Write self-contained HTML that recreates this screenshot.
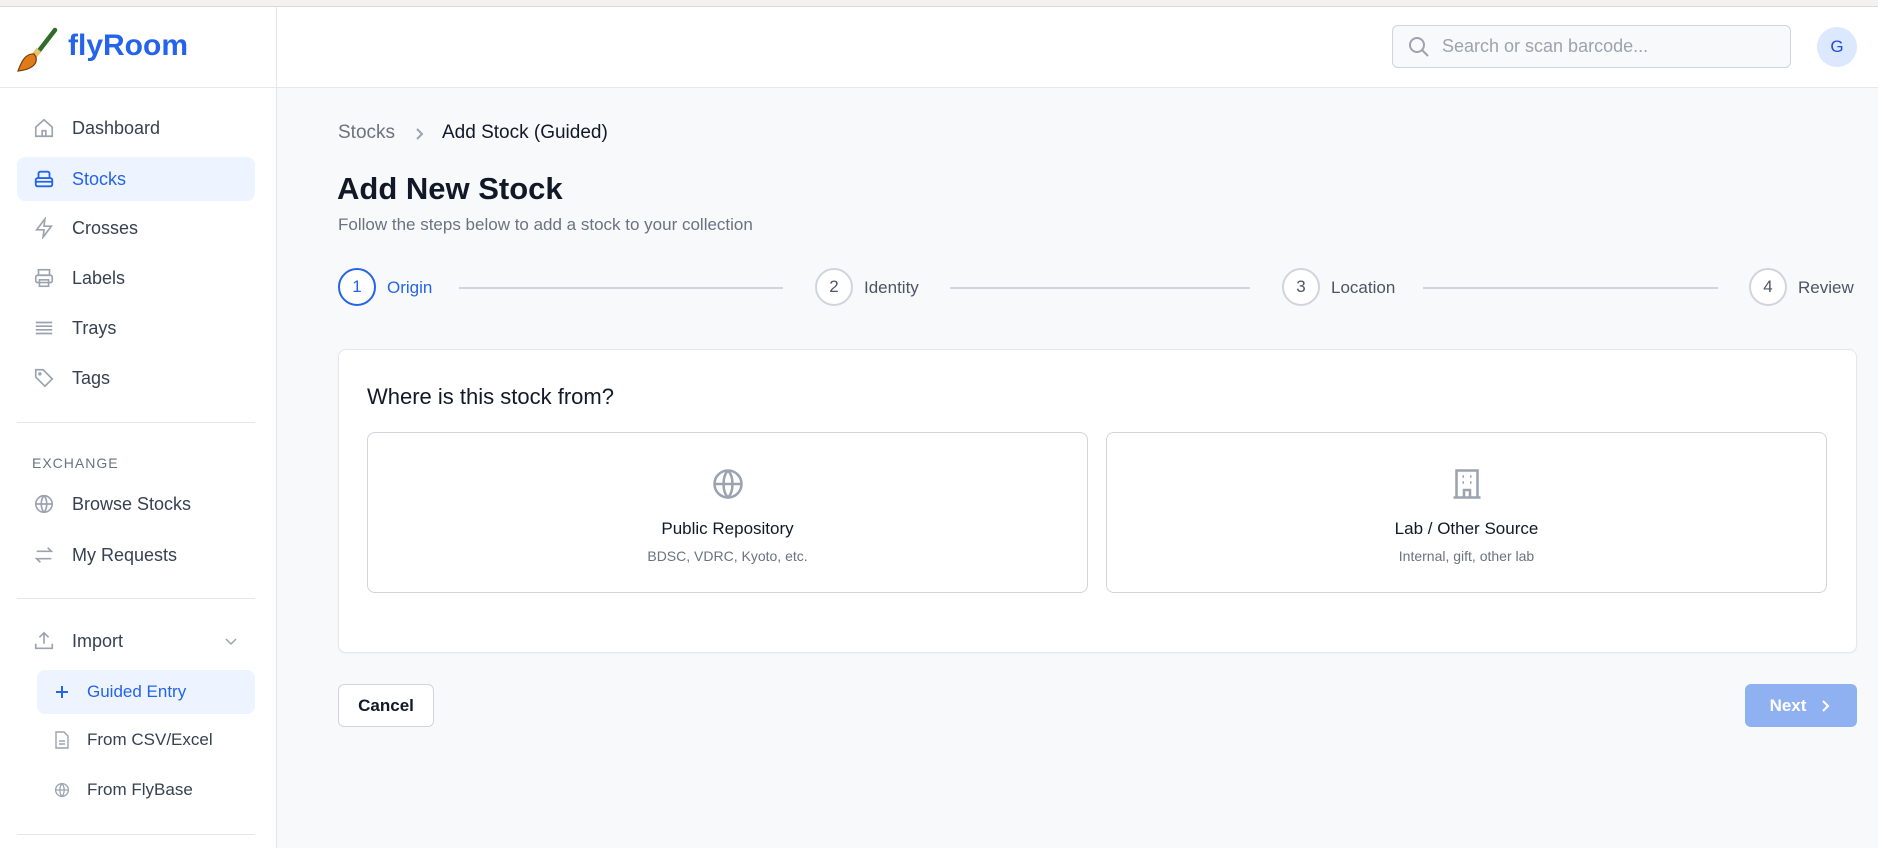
<!DOCTYPE html>
<html><head><meta charset="utf-8"><style>
*{box-sizing:border-box;margin:0;padding:0}
body{width:1878px;height:848px;overflow:hidden;background:#f8f9fb;font-family:"Liberation Sans",sans-serif;color:#1f2937;position:relative}
.a{position:absolute}
.topstrip{left:0;top:0;width:1878px;height:7px;background:#f3f2f1;border-bottom:1px solid #dcdad8}
.side{left:0;top:7px;width:277px;height:841px;background:#fff;border-right:1px solid #e5e7eb}
.top{left:277px;top:7px;width:1601px;height:81px;background:#fff;border-bottom:1px solid #e5e7eb}
.nav{left:17px;width:238px;height:44px;border-radius:8px;display:flex;align-items:center;font-size:18px;color:#374151}
.nav svg{position:absolute;left:27px;top:50%;transform:translate(-50%,-50%)}
.nav span{position:absolute;left:55px}
.hr{left:17px;width:238px;height:1px;background:#e5e7eb}
.sub{left:37px;width:218px;height:44px;border-radius:8px;font-size:17px;color:#374151}
.sub svg{position:absolute;left:25px;top:50%;transform:translate(-50%,-50%)}
.sub span{position:absolute;left:50px;top:50%;transform:translateY(-50%)}
.circ{width:38px;height:38px;border-radius:50%;border:2px solid #d1d5db;display:flex;align-items:center;justify-content:center;font-size:17px;color:#4b5563;background:#fff}
.lbl{font-size:17px;color:#4b5563}
.line{height:2px;background:#d1d5db}
.opt{top:432px;width:721px;height:161px;border:1px solid #d1d5db;border-radius:8px;background:#fff;text-align:center}
</style></head><body>
<div class="a topstrip"></div>
<div class="a side">
 <svg class="a" style="left:16px;top:20px" width="42" height="46" viewBox="0 0 42 46"><path d="M39 3 L22 25" stroke="#2f6b2a" stroke-width="4.5" stroke-linecap="round"/><path d="M23 23 L17 30" stroke="#e8c26a" stroke-width="6"/><path d="M18 27 C9 26 5 36 2 44 C12 43 22 39 20 30 Z" fill="#e07b1a" stroke="#7a3d0a" stroke-width="1.2"/></svg>
 <div class="a" style="left:68px;top:22px;font-size:30px;font-weight:bold;color:#2563eb">flyRoom</div>
</div>
<div class="a" style="left:0;top:87px;width:277px;height:1px;background:#e5e7eb"></div>

<div class="a nav" style="top:106px"><svg width="22" height="22" viewBox="0 0 24 24" fill="none" stroke="#9ca3af" stroke-width="1.8"><path d="M3 11 L12 3 L21 11 V21 H3 Z M10 21 V15 H14 V21"/></svg><span>Dashboard</span></div>
<div class="a nav" style="top:157px;background:#eef4ff;color:#2563eb"><svg width="22" height="22" viewBox="0 0 24 24" fill="none" stroke="#2563eb" stroke-width="2"><rect x="3" y="11" width="18" height="9" rx="2"/><path d="M6 11 V6 a2 2 0 0 1 2-2 h8 a2 2 0 0 1 2 2 V11 M3 15 H21"/></svg><span>Stocks</span></div>
<div class="a nav" style="top:206px"><svg width="22" height="22" viewBox="0 0 24 24" fill="none" stroke="#9ca3af" stroke-width="1.8"><path d="M13 2 L4 14 H12 L11 22 L20 10 H12 Z"/></svg><span>Crosses</span></div>
<div class="a nav" style="top:256px"><svg width="22" height="22" viewBox="0 0 24 24" fill="none" stroke="#9ca3af" stroke-width="1.8"><rect x="6" y="3" width="12" height="6"/><rect x="3" y="9" width="18" height="8" rx="2"/><rect x="7" y="14" width="10" height="7"/></svg><span>Labels</span></div>
<div class="a nav" style="top:306px"><svg width="22" height="22" viewBox="0 0 24 24" fill="none" stroke="#9ca3af" stroke-width="1.8"><path d="M3 6H21M3 10H21M3 14H21M3 18H21"/></svg><span>Trays</span></div>
<div class="a nav" style="top:356px"><svg width="22" height="22" viewBox="0 0 24 24" fill="none" stroke="#9ca3af" stroke-width="1.8"><path d="M3 3 H11 L21 13 L13 21 L3 11 Z"/><circle cx="7.5" cy="7.5" r="1"/></svg><span>Tags</span></div>
<div class="a hr" style="top:422px"></div>
<div class="a" style="left:32px;top:455px;font-size:14px;letter-spacing:1px;color:#6b7280">EXCHANGE</div>
<div class="a nav" style="top:482px"><svg width="22" height="22" viewBox="0 0 24 24" fill="none" stroke="#9ca3af" stroke-width="1.8"><circle cx="12" cy="12" r="9"/><path d="M3 12H21M12 3 C8 7 8 17 12 21 C16 17 16 7 12 3"/></svg><span>Browse Stocks</span></div>
<div class="a nav" style="top:533px"><svg width="22" height="22" viewBox="0 0 24 24" fill="none" stroke="#9ca3af" stroke-width="1.8"><path d="M4 8H20L16 4M20 16H4L8 20"/></svg><span>My Requests</span></div>
<div class="a hr" style="top:598px"></div>
<div class="a nav" style="top:619px"><svg width="22" height="22" viewBox="0 0 24 24" fill="none" stroke="#9ca3af" stroke-width="1.8"><path d="M12 15V3M7 8L12 3L17 8M3 15V20H21V15"/></svg><span>Import</span><svg style="left:214px" width="16" height="16" viewBox="0 0 16 16" fill="none" stroke="#9ca3af" stroke-width="1.5"><path d="M3 6L8 11L13 6"/></svg></div>
<div class="a sub" style="top:670px;background:#eef4ff;color:#2563eb"><svg width="16" height="16" viewBox="0 0 16 16" stroke="#2563eb" stroke-width="2"><path d="M8 2V14M2 8H14"/></svg><span>Guided Entry</span></div>
<div class="a sub" style="top:718px"><svg width="16" height="18" viewBox="0 0 16 18" fill="none" stroke="#9ca3af" stroke-width="1.4"><path d="M2 1H10L14 5V17H2Z M5 10H11M5 13H11"/></svg><span>From CSV/Excel</span></div>
<div class="a sub" style="top:768px"><svg width="17" height="17" viewBox="0 0 24 24" fill="none" stroke="#9ca3af" stroke-width="1.8"><circle cx="12" cy="12" r="9"/><path d="M3 12H21M12 3 C8 7 8 17 12 21 C16 17 16 7 12 3"/></svg><span>From FlyBase</span></div>
<div class="a hr" style="top:834px"></div>

<div class="a top"></div>
<div class="a" style="left:1392px;top:25px;width:399px;height:43px;border:1px solid #d1d5db;border-radius:6px;background:#f8f9fb"></div>
<svg class="a" style="left:1407px;top:35px" width="24" height="24" viewBox="0 0 24 24" fill="none" stroke="#9ca3af" stroke-width="2"><circle cx="10" cy="10" r="7"/><path d="M15 15L21 21"/></svg>
<div class="a" style="left:1442px;top:36px;font-size:18px;color:#9ca3af">Search or scan barcode...</div>
<div class="a" style="left:1817px;top:27px;width:40px;height:40px;border-radius:50%;background:#dbe8fe;color:#1d4ed8;font-size:17px;display:flex;align-items:center;justify-content:center">G</div>

<div class="a" style="left:338px;top:122px;font-size:19px;color:#6b7280">Stocks</div>
<svg class="a" style="left:412px;top:127px" width="14" height="14" viewBox="0 0 14 14" fill="none" stroke="#9ca3af" stroke-width="2"><path d="M5 2L10 7L5 12"/></svg>
<div class="a" style="left:442px;top:122px;font-size:19px;color:#111827">Add Stock (Guided)</div>
<div class="a" style="left:337px;top:171px;font-size:31px;font-weight:bold;color:#111827">Add New Stock</div>
<div class="a" style="left:338px;top:215px;font-size:17px;color:#6b7280">Follow the steps below to add a stock to your collection</div>

<div class="a circ" style="left:338px;top:268px;border-color:#2563eb;color:#2563eb">1</div>
<div class="a lbl" style="left:387px;top:278px;color:#2563eb">Origin</div>
<div class="a line" style="left:459px;top:287px;width:324px"></div>
<div class="a circ" style="left:815px;top:268px">2</div>
<div class="a lbl" style="left:864px;top:278px">Identity</div>
<div class="a line" style="left:950px;top:287px;width:300px"></div>
<div class="a circ" style="left:1282px;top:268px">3</div>
<div class="a lbl" style="left:1331px;top:278px">Location</div>
<div class="a line" style="left:1423px;top:287px;width:295px"></div>
<div class="a circ" style="left:1749px;top:268px">4</div>
<div class="a lbl" style="left:1798px;top:278px">Review</div>

<div class="a" style="left:338px;top:349px;width:1519px;height:304px;background:#fff;border:1px solid #e5e7eb;border-radius:8px;box-shadow:0 1px 2px rgba(0,0,0,.04)"></div>
<div class="a" style="left:367px;top:384px;font-size:22px;color:#111827">Where is this stock from?</div>
<div class="a opt" style="left:367px">
 <svg style="margin-top:33px" width="36" height="36" viewBox="0 0 24 24" fill="none" stroke="#9ca3af" stroke-width="1.7"><circle cx="12" cy="12" r="9"/><path d="M3 12H21M12 3 C8 7 8 17 12 21 C16 17 16 7 12 3"/></svg>
 <div style="margin-top:12px;font-size:17px;color:#111827">Public Repository</div>
 <div style="margin-top:9px;font-size:14px;color:#6b7280">BDSC, VDRC, Kyoto, etc.</div>
</div>
<div class="a opt" style="left:1106px">
 <svg style="margin-top:33px" width="36" height="36" viewBox="0 0 24 24" fill="none" stroke="#9ca3af" stroke-width="1.7"><path d="M5 21V3H19V21M3 21H21M9 7H10M14 7H15M9 11H10M14 11H15M10 21V16H14V21"/></svg>
 <div style="margin-top:12px;font-size:17px;color:#111827">Lab / Other Source</div>
 <div style="margin-top:9px;font-size:14px;color:#6b7280">Internal, gift, other lab</div>
</div>

<div class="a" style="left:338px;top:684px;width:96px;height:43px;border:1px solid #d1d5db;border-radius:6px;background:#fff;font-size:17px;font-weight:bold;color:#111827;display:flex;align-items:center;justify-content:center">Cancel</div>
<div class="a" style="left:1745px;top:684px;width:112px;height:43px;border-radius:6px;background:#8fb1f2;font-size:17px;font-weight:bold;color:#fff;display:flex;align-items:center;justify-content:center;gap:14px">Next<svg width="12" height="14" viewBox="0 0 12 14" fill="none" stroke="#fff" stroke-width="2"><path d="M3 2L8 7L3 12"/></svg></div>
</body></html>
